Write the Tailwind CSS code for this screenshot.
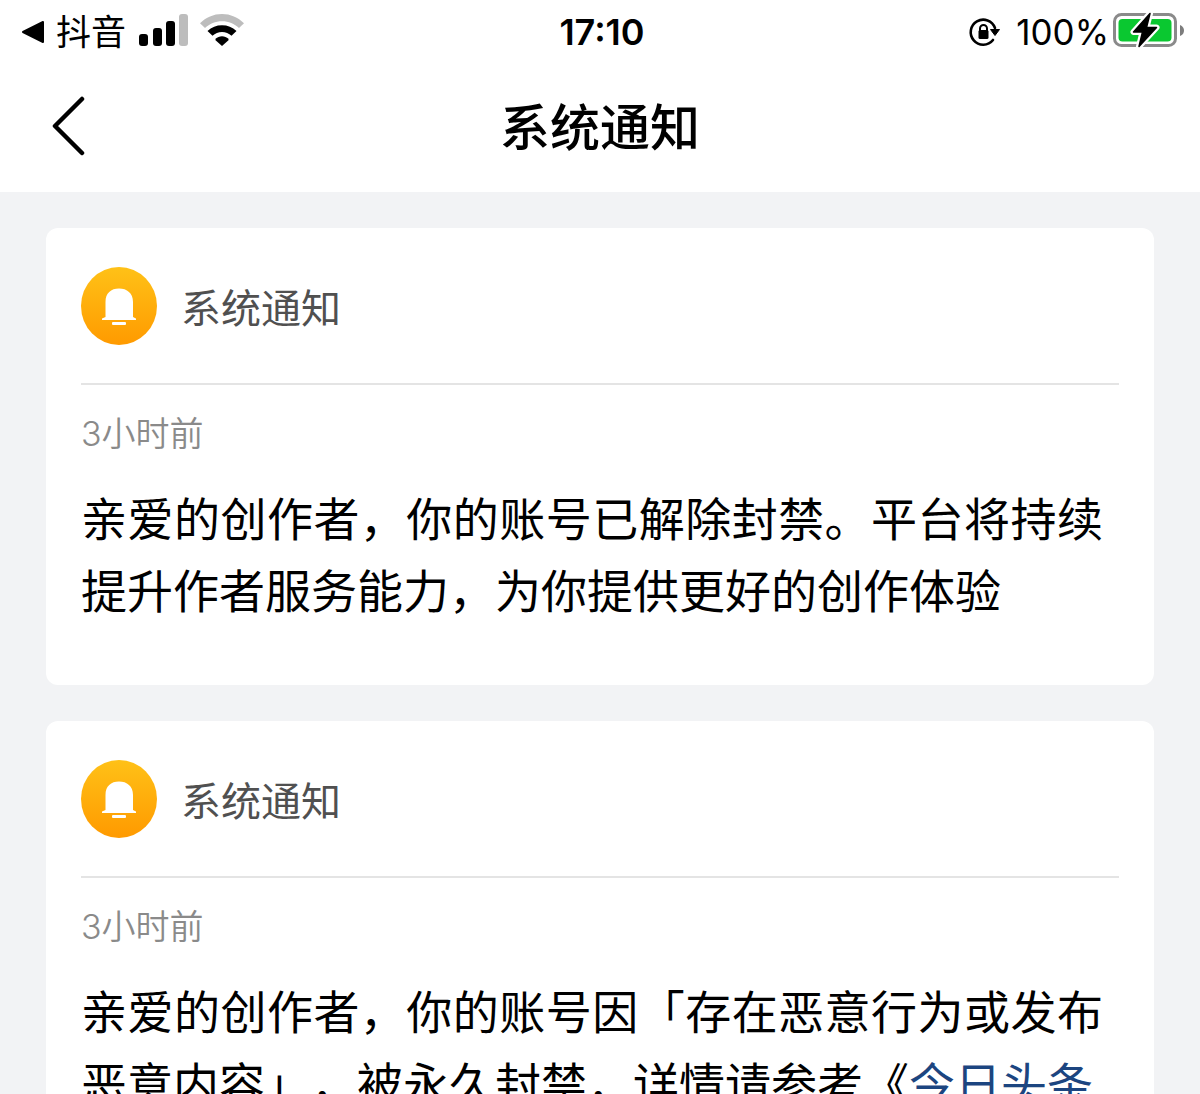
<!DOCTYPE html>
<html lang="zh-CN">
<head>
    <meta charset="UTF-8">
    <meta name="viewport" content="width=device-width, initial-scale=1.0">
    <title>系统通知</title>
    <script src="https://cdn.jsdelivr.net/npm/@tailwindcss/browser@4"></script>
</head>
<body class="h-screen overflow-hidden bg-[#f2f3f5] text-black font-['Inter','Noto_Sans_CJK_SC',sans-serif] [text-spacing-trim:space-all]">
    <div class="bg-white">
        <!-- Status bar -->
        <div class="grid grid-cols-3 items-center h-16 pl-5 pr-4 text-[35px] leading-none">
            <div class="flex items-center">
                <svg class="w-6 h-6 mr-3" viewBox="0 0 24 24" aria-hidden="true">
                    <path d="M3 12 L23 2 V22 Z" stroke="#000" stroke-width="2" stroke-linejoin="round"/>
                </svg>
                <span class="mr-3">抖音</span>
                <svg class="w-[50px] h-8 mr-3 mb-1" viewBox="0 0 50 32" aria-hidden="true">
                    <rect x="1" y="20" width="9" height="12" rx="3"/>
                    <rect x="15" y="14" width="9" height="18" rx="3"/>
                    <rect x="28" y="7" width="9" height="25" rx="3"/>
                    <rect x="41" y="0" width="9" height="32" rx="3" fill="#bdbdbd"/>
                </svg>
                <svg class="w-11 h-8 mb-1" viewBox="0 0 44 33" preserveAspectRatio="none" aria-hidden="true">
                    <path d="M22 0 C13.500 0 6 3.500 0 9.500 L5 14.500 C9.500 10 15.500 7.500 22 7.500 S34.500 10 39 14.500 L44 9.500 C38 3.500 30.500 0 22 0 Z" fill="#bdbdbd"/>
                    <path d="M22 11.500 C16.500 11.500 11.500 13.500 7.500 17.500 L12.500 22.500 C15 20 18.500 18.500 22 18.500 S29 20 31.500 22.500 L36.500 17.500 C32.500 13.500 27.500 11.500 22 11.500 Z"/>
                    <path d="M22 23 C19.500 23 17.500 24 15.500 25.500 V27 L22 33 L28.500 27 V25.500 C26.500 24 24.500 23 22 23 Z"/>
                </svg>
            </div>
            <time class="text-center text-4xl leading-none font-semibold">17:10</time>
            <div class="flex items-center justify-end">
                <svg class="w-8 h-8 mr-4" viewBox="0 0 32 32" aria-hidden="true">
                    <path d="M25 24 A12.500 12.500 0 1 1 27 12" fill="none" stroke="#000" stroke-width="2.600" stroke-linecap="round"/>
                    <path d="M22.500 13.500 H31.500 L27 19.500 Z" stroke="#000" stroke-width="1" stroke-linejoin="round"/>
                    <path d="M12 15 V12.500 A3.500 3.500 0 0 1 19 12.500 V15" fill="none" stroke="#000" stroke-width="2"/>
                    <rect x="10.500" y="14" width="10" height="9" rx="1.500"/>
                </svg>
                <span class="mr-1">100%</span>
                <svg class="w-[71px] h-9 mb-1" viewBox="0 0 71 36" role="img" aria-label="正在充电">
                    <rect x="1.500" y="2.500" width="61" height="31" rx="7" fill="#fff" stroke="#8a8a8a" stroke-width="3"/>
                    <rect x="5.500" y="7" width="53" height="22.500" rx="4" fill="#0ac830"/>
                    <path d="M67 13 V24 C70 23 71 20.500 71 18.500 S70 14 67 13 Z" fill="#7d7d7d"/>
                    <path d="M37 1.500 L20.500 20 H29.500 L26 34.500 L43.500 15.500 H33.500 Z" fill="#fff" stroke="#fff" stroke-width="6" stroke-linejoin="round"/>
                    <path d="M37 1.500 L20.500 20 H29.500 L26 34.500 L43.500 15.500 H33.500 Z" stroke="#000" stroke-width="1.500" stroke-linejoin="round"/>
                </svg>
            </div>
        </div>

        <!-- Header -->
        <header class="grid grid-cols-[1fr_auto_1fr] items-center h-32 px-12">
            <button type="button" class="w-10 h-16" aria-label="返回">
                <svg class="w-10 h-16" viewBox="0 0 40 64" fill="none" stroke="#000" stroke-width="4.500" stroke-linecap="round" stroke-linejoin="round" aria-hidden="true">
                    <path d="M34 3 L7 30 L34 57"/>
                </svg>
            </button>
            <h1 class="text-[50px] leading-none font-medium">系统通知</h1>
        </header>
    </div>

    <!-- Notification list -->
    <main class="flex flex-col gap-9 py-9 px-[46px]">
        <article class="bg-white rounded-xl px-[35px] pb-[58px]">
            <div class="flex items-center h-[157px] gap-6 border-b-2 border-[#e4e4e4]">
                <svg class="w-[76px] h-[78px]" viewBox="0 0 76 78" aria-hidden="true">
                    <defs>
                        <linearGradient id="bellFill" x1="0" y1="0" x2="0" y2="1">
                            <stop offset="0" stop-color="#ffc117"/>
                            <stop offset="1" stop-color="#ff9a00"/>
                        </linearGradient>
                    </defs>
                    <ellipse cx="38" cy="39" rx="38" ry="39" fill="url(#bellFill)"/>
                    <path d="M24.500 50 V35 C24.500 26 30 21.500 38 21.500 S52 26 52 35 V50 L55 51.500 V53 H21 V51.500 Z" fill="#fff"/>
                    <rect x="31" y="55" width="14" height="3" rx="1" fill="#fff"/>
                </svg>
                <h2 class="text-[40px] leading-none text-[#505050] font-['Noto_Sans_CJK_SC',sans-serif]">系统通知</h2>
            </div>
            <time class="block pt-6 text-[34px] leading-[50px] font-[350] text-[#8a8a8a]">3小时前</time>
            <p class="pt-6 pr-4 text-[46px] leading-[72px] text-justify">亲爱的创作者，你的账号已解除封禁。平台将持续提升作者服务能力，为你提供更好的创作体验</p>
        </article>

        <article class="bg-white rounded-xl px-[35px] pb-[58px]">
            <div class="flex items-center h-[157px] gap-6 border-b-2 border-[#e4e4e4]">
                <svg class="w-[76px] h-[78px]" viewBox="0 0 76 78" aria-hidden="true">
                    <ellipse cx="38" cy="39" rx="38" ry="39" fill="url(#bellFill)"/>
                    <path d="M24.500 50 V35 C24.500 26 30 21.500 38 21.500 S52 26 52 35 V50 L55 51.500 V53 H21 V51.500 Z" fill="#fff"/>
                    <rect x="31" y="55" width="14" height="3" rx="1" fill="#fff"/>
                </svg>
                <h2 class="text-[40px] leading-none text-[#505050] font-['Noto_Sans_CJK_SC',sans-serif]">系统通知</h2>
            </div>
            <time class="block pt-6 text-[34px] leading-[50px] font-[350] text-[#8a8a8a]">3小时前</time>
            <p class="pt-6 pr-4 text-[46px] leading-[72px] text-justify">亲爱的创作者，你的账号因「存在恶意行为或发布恶意内容」，被永久封禁，详情请参考《<a href="#" class="text-[#1c4580]">今日头条</a></p>
        </article>
    </main>
</body>
</html>
